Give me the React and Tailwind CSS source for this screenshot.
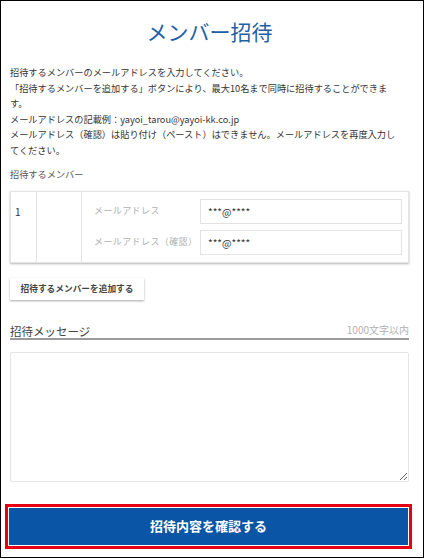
import { useState } from 'react';

const jp = { fontFamily: '"Noto Sans CJK JP", "Noto Sans", sans-serif' };

function EmailField({ label, value }) {
  return (
    <div className="flex items-center">
      <span className="w-[118px] shrink-0 pl-[12px] text-[9px] tracking-[0.4px] text-[#b0b0b0]">{label}</span>
      <input
        readOnly
        value={value}
        className="h-[25px] w-[202px] border border-[#e2e2e2] bg-white px-[7px] text-[10px] text-[#333] outline-none"
        style={jp}
      />
    </div>
  );
}

export default function App() {
  const [message, setMessage] = useState('');

  return (
    <div className="h-[558px] w-[424px] border border-black bg-white" style={jp}>
      <div className="flex flex-col pl-[9px] pr-[14px]">
        <h1 className="mt-[15px] text-center text-[21px] leading-[30px] text-[#1f5fa6]">メンバー招待</h1>

        {/* 説明文 */}
        <p className="mt-[19px] whitespace-nowrap text-[9.2px] leading-[15.6px] text-[#333]">
          招待するメンバーのメールアドレスを入力してください。<br />
          「招待するメンバーを追加する」ボタンにより、最大10名まで同時に招待することができま<br />
          す。<br />
          メールアドレスの記載例：yayoi_tarou@yayoi-kk.co.jp<br />
          メールアドレス（確認）は貼り付け（ペースト）はできません。メールアドレスを再度入力し<br />
          てください。
        </p>

        <div className="mt-[7px] text-[9.2px] leading-[16px] text-[#555]">招待するメンバー</div>

        {/* メンバー表 */}
        <div className="mt-[9px] flex border border-[#e3e3e3] shadow-[0_1px_2px_rgba(0,0,0,0.3)]">
          <div className="w-[26px] shrink-0 border-r border-[#e3e3e3] pl-[4px] pt-[12px] text-[10px] leading-[16px] text-[#333]">1</div>
          <div className="w-[45px] shrink-0 border-r border-[#e3e3e3]" />
          <div className="flex flex-col gap-[6px] py-[7px]">
            <EmailField label="メールアドレス" value="***@****" />
            <EmailField label="メールアドレス（確認）" value="***@****" />
          </div>
        </div>

        <div className="mt-[15px] flex">
          <button className="h-[22px] w-[134px] bg-white text-[8.7px] font-bold text-[#444] shadow-[0_1px_2px_rgba(0,0,0,0.35)]" style={jp}>
            招待するメンバーを追加する
          </button>
        </div>

        {/* 招待メッセージ */}
        <div className="mt-[24px] flex items-end justify-between border-b-2 border-[#9a9a9a]">
          <span className="text-[11.5px] leading-[14px] text-[#444]">招待メッセージ</span>
          <span className="pb-[2px] text-[10px] leading-[12px] text-[#b0b0b0]">1000文字以内</span>
        </div>

        <textarea
          value={message}
          onChange={(e) => setMessage(e.target.value)}
          className="mt-[12px] block h-[130px] w-full rounded-[2px] border border-[#e5e5e5] p-[6px] text-[10px] outline-none"
          style={jp}
        />

        <div className="ml-[-5px] mt-[22px] w-[407px] border-[3px] border-[#e60012] bg-white p-[1px]">
          <button className="flex h-[37px] w-full items-center justify-center bg-[#0a55a5] text-[13px] font-bold text-white" style={jp}>
            招待内容を確認する
          </button>
        </div>
      </div>
    </div>
  );
}
